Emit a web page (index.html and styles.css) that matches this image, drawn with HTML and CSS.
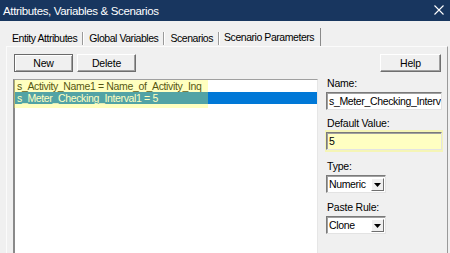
FILE: index.html
```html
<!DOCTYPE html>
<html>
<head>
<meta charset="utf-8">
<link rel="stylesheet" href="styles.css">
</head>
<body>
<div class="window">
  <div class="titlebar">
    <span class="title">Attributes, Variables &amp; Scenarios</span>
    <svg class="close" width="10" height="10" viewBox="0 0 10 10"><path d="M0.5 0.5L9.5 9.5M9.5 0.5L0.5 9.5" stroke="#fff" stroke-width="1.1" fill="none"/></svg>
  </div>
  <div class="tabs">
    <div class="tab">Entity Attributes</div>
    <div class="tab">Global Variables</div>
    <div class="tab">Scenarios</div>
    <div class="tab active">Scenario Parameters</div>
  </div>
  <div class="page">
    <div class="toolbar">
      <button class="btn default">New</button>
      <button class="btn">Delete</button>
      <button class="btn help">Help</button>
    </div>
    <div class="content">
      <div class="listbox">
        <div class="item">s_Activity_Name1 = Name_of_Activity_Inq</div>
        <div class="item selected">s_Meter_Checking_Interval1 = 5</div>
        <div class="mark"></div>
      </div>
      <div class="fields">
        <div class="label">Name:</div>
        <div class="input">s_Meter_Checking_Interv</div>
        <div class="label spaced">Default Value:</div>
        <div class="hl">
          <div class="input yellow">5</div>
        </div>
        <div class="label spaced2">Type:</div>
        <div class="select"><span class="val">Numeric</span><span class="drop"><svg width="7" height="4" viewBox="0 0 7 4"><path d="M0 0H7L3.5 4Z" fill="#000"/></svg></span></div>
        <div class="label spaced3">Paste Rule:</div>
        <div class="select"><span class="val">Clone</span><span class="drop"><svg width="7" height="4" viewBox="0 0 7 4"><path d="M0 0H7L3.5 4Z" fill="#000"/></svg></span></div>
      </div>
    </div>
  </div>
</div>
</body>
</html>
```
FILE: styles.css
```css
* { box-sizing: border-box; }
html, body { margin: 0; padding: 0; }
body {
  width: 450px;
  height: 253px;
  overflow: hidden;
  background: #f0f0f0;
  font-family: "Liberation Sans", Arial, sans-serif;
  font-size: 10.5px;
  color: #000;
}
.window { width: 450px; height: 253px; overflow: hidden; }
.titlebar {
  height: 21px;
  background: #18365f;
  display: flex;
  align-items: center;
  justify-content: space-between;
  padding: 0 6px 0 3px;
}
.title {
  color: #fff;
  font-size: 11.5px;
  letter-spacing: -0.35px;
  padding-top: 1px;
}
.close { display: block; margin-top: -1px; }
.tabs {
  display: flex;
  height: 18px;
  margin-top: 7px;
  padding-left: 7px;
  align-items: flex-start;
}
.tab {
  margin-top: 4px;
  height: 13px;
  line-height: 12px;
  padding: 0 5px 0 5px;
  border-right: 1px solid #9a9a9a;
  box-shadow: 1px 0 0 #fff;
  white-space: nowrap;
  letter-spacing: -0.45px;
}
.tab + .tab { padding-left: 6px; }
.tab.active {
  margin-top: 0;
  height: 18px;
  line-height: 18px;
  padding: 0 6px 0 4px;
  margin-left: 1px;
  border-right: 1px solid #8a8a8a;
  box-shadow: none;
  background: #f0f0f0;
}
.page {
  margin: 0 2px 0 6px;
  height: 220px;
  border-top: 1px solid #fbfbfb;
  border-left: 1px solid #fbfbfb;
  border-right: 1px solid #9a9a9a;
  padding: 7px 4px 0 6px;
}
.toolbar {
  display: flex;
  gap: 4px;
  height: 18px;
}
.btn {
  font-family: inherit;
  font-size: 10.5px;
  letter-spacing: -0.2px;
  width: 59px;
  height: 18px;
  padding: 0;
  margin: 0;
  background: #f0f0f0;
  border: 1px solid;
  border-color: #fff #6f6f6f #6f6f6f #fff;
  box-shadow: inset -1px -1px 0 #a0a0a0;
  color: #000;
}
.btn.default {
  margin-left: 1px;
  border-color: #6a6a6a;
  box-shadow: inset 1px 1px 0 #fff, inset -1px -1px 0 #a0a0a0;
}
.btn.help {
  margin-left: auto;
  margin-right: 2px;
  width: 61px;
}
.content {
  display: flex;
  gap: 7px;
  margin-top: 5px;
}
.listbox {
  position: relative;
  width: 305px;
  height: 200px;
  margin-top: 2px;
  background: #fff;
  border-top: 1px solid #a0a0a0;
  border-left: 2px solid #8a8a8a;
  border-right: 1px solid #e6e6e6;
}
.item {
  height: 12px;
  line-height: 12px;
  padding-left: 2px;
  white-space: nowrap;
  letter-spacing: -0.35px;
}
.item.selected {
  background: #0078d7;
  color: #fff;
}
.mark {
  position: absolute;
  left: -1px;
  top: 0;
  width: 194px;
  height: 28px;
  background: rgba(255, 255, 60, 0.32);
}
.fields {
  width: 118px;
  display: flex;
  flex-direction: column;
  align-items: flex-start;
}
.label {
  height: 13px;
  line-height: 13px;
  padding-left: 2px;
  margin-bottom: 2px;
  letter-spacing: -0.2px;
}
.label.spaced { margin-top: 7px; margin-bottom: 0; }
.label.spaced2 { margin-top: 8px; }
.label.spaced3 { margin-top: 8px; }
.input {
  width: 116px;
  height: 18px;
  margin-left: 1px;
  background: #fff;
  border: 1px solid;
  border-color: #7a7a7a #e3e3e3 #e3e3e3 #7a7a7a;
  box-shadow: inset 1px 1px 0 #a0a0a0;
  line-height: 16px;
  padding-left: 2px;
  white-space: nowrap;
  overflow: hidden;
  letter-spacing: -0.35px;
}
.hl {
  width: 118px;
  padding: 2px 0;
  background: #f5f5b6;
}
.input.yellow { background: #ffffc2; }
.select {
  width: 60px;
  height: 18px;
  margin-left: 1px;
  background: #fff;
  border: 1px solid;
  border-color: #7a7a7a #e3e3e3 #e3e3e3 #7a7a7a;
  box-shadow: inset 1px 1px 0 #a0a0a0;
  display: flex;
  align-items: stretch;
  padding: 2px 1px 1px 2px;
}
.val {
  flex: 1;
  line-height: 13px;
  letter-spacing: -0.35px;
}
.drop {
  width: 13px;
  background: #f0f0f0;
  border: 1px solid;
  border-color: #fff #6f6f6f #6f6f6f #fff;
  display: flex;
  align-items: center;
  justify-content: center;
}
.drop svg { display: block; }
```
